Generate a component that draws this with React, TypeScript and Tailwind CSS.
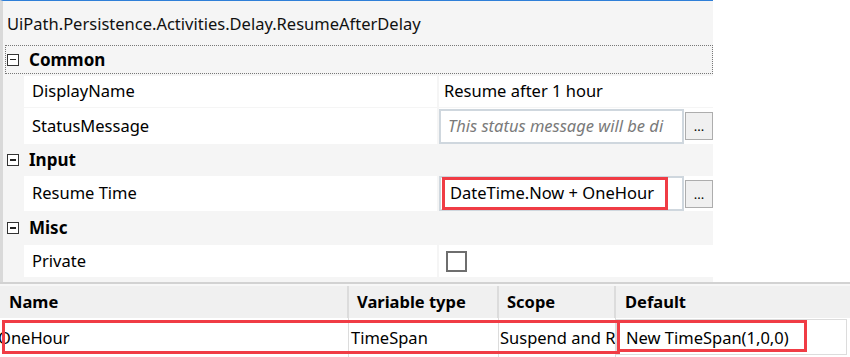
import React from "react";

const font = { fontFamily: '"Noto Sans", "Open Sans", sans-serif' };

function MinusBox() {
  return (
    <div className="w-[12px] h-[12px] border border-[#333] bg-white flex items-center justify-center shrink-0">
      <div className="w-[6px] h-[1.5px] bg-[#222]" />
    </div>
  );
}

function Header({ label, dotted, h }: { label: string; dotted?: boolean; h: string }) {
  return (
    <div
      className={`flex items-center gap-[10px] ${h} ${
        dotted ? "border border-dotted border-[#777] ml-[2px] pl-[1px]" : "pl-[4px]"
      }`}
    >
      <MinusBox />
      <span className="font-bold text-[17px] text-black">{label}</span>
    </div>
  );
}

function Row({ label, h, children }: { label: string; h: string; children?: React.ReactNode }) {
  return (
    <div className={`flex ${h}`}>
      <div className="w-[21px] shrink-0" />
      <div className="w-[413px] bg-white flex items-center pl-[8px] text-[16.5px] text-black shrink-0">{label}</div>
      <div className="w-[2px] shrink-0" />
      <div className="flex-1 bg-white flex items-center">{children}</div>
    </div>
  );
}

function Dots() {
  return (
    <div className="w-[28px] h-[28px] border border-[#adadad] bg-[#f0f0f0] flex items-end justify-center pb-[6px] text-[13px] leading-none text-black ml-[1px] shrink-0">
      ...
    </div>
  );
}

export default function App() {
  return (
    <div className="w-[850px] h-[357px] bg-white overflow-hidden relative" style={font}>
      {/* properties panel */}
      <div className="w-[713px] h-[282px] bg-[#f5f5f5] border-t border-[#2f7fd8] border-l-[3px] border-l-[#d9d9d9] flex flex-col">
        <div className="h-[44px] flex items-center pl-[4px] pt-[3px] text-[16.5px] text-[#111]">
          UiPath.Persistence.Activities.Delay.ResumeAfterDelay
        </div>
        <Header label="Common" dotted h="h-[29px]" />
        <div className="h-[2px]" />
        <Row label="DisplayName" h="h-[31px]">
          <span className="pl-[5px] text-[16.5px] text-black">Resume after 1 hour</span>
        </Row>
        <div className="h-[1px]" />
        <Row label="StatusMessage" h="h-[36px]">
          <div className="w-[245px] h-[35px] border-2 border-[#cfd7de] bg-white flex items-center pl-[7px] overflow-hidden whitespace-nowrap shrink-0">
            <span className="italic text-[16.5px] text-[#7a7a7a]">This status message will be di</span>
          </div>
          <Dots />
        </Row>
        <Header label="Input" h="h-[32px]" />
        <Row label="Resume Time" h="h-[35px]">
          <div className="w-[245px] h-[35px] border-2 border-[#cfd7de] bg-white flex items-center pl-[1px] shrink-0">
            <div className="w-[226px] h-[33px] border-[3px] border-[#f03c45] flex items-center pl-[5px] whitespace-nowrap">
              <span className="text-[16.5px] text-black">DateTime.Now + OneHour</span>
            </div>
          </div>
          <Dots />
        </Row>
        <Header label="Misc" h="h-[34px]" />
        <Row label="Private" h="h-[32px]">
          <div className="ml-[7px] w-[21px] h-[21px] border-2 border-[#6e6e6e] bg-white" />
        </Row>
      </div>
      <div className="h-[2px] bg-[#d2d2d2]" />
      <div className="h-[2px] bg-[#f7f7f7]" />
      {/* variables grid */}
      <div className="h-[32px] bg-[#f0f0f0] flex text-[16.5px] font-bold text-black">
        <div className="w-[349px] pl-[9px] flex items-center border-r-2 border-[#dcdcdc]">Name</div>
        <div className="w-[150px] pl-[8px] flex items-center border-r-2 border-[#dcdcdc]">Variable type</div>
        <div className="w-[117px] pl-[8px] flex items-center border-r-2 border-[#dcdcdc]">Scope</div>
        <div className="flex-1 pl-[9px] flex items-center">Default</div>
      </div>
      <div className="h-[39px] bg-white flex text-[16.5px] text-black relative">
        <div className="w-[349px] flex items-center border-r border-[#dcdcdc] overflow-hidden pt-[2px]">
          <span className="ml-[-2px]">OneHour</span>
        </div>
        <div className="w-[150px] pl-[2px] flex items-center border-r border-[#dcdcdc] pt-[2px]">TimeSpan</div>
        <div className="w-[117px] pl-[1px] flex items-center border-r border-[#dcdcdc] overflow-hidden whitespace-nowrap pt-[2px]">
          Suspend and R
        </div>
        <div className="w-[231px] flex items-center border border-[#dcdcdc] pl-[9px] h-[36px] mt-[1px] pt-[2px]">
          New TimeSpan(1,0,0)
        </div>
        <div className="absolute left-[2px] top-[2px] w-[618px] h-[34px] border-[3px] border-[#f03c45]" />
        <div className="absolute left-[617px] top-[2px] w-[190px] h-[32px] border-[3px] border-[#f03c45]" />
      </div>
    </div>
  );
}
